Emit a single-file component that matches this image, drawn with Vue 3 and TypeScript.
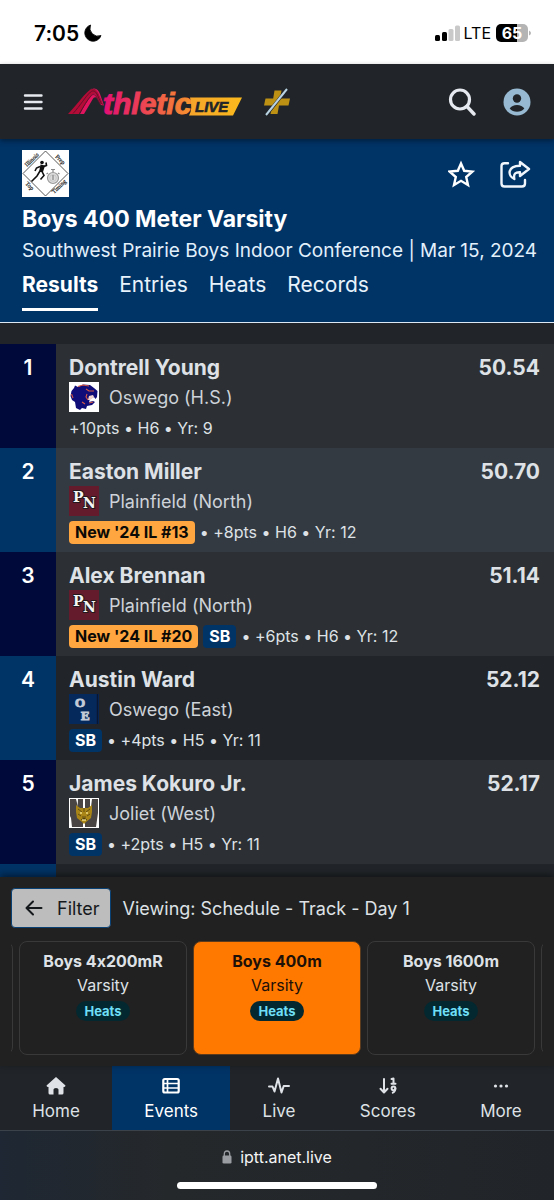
<script setup lang="ts">
import { ref } from 'vue'

type Logo = 'panther' | 'pn' | 'oe' | 'tiger'

interface Result {
  place: number
  name: string
  school: string
  logo: Logo
  rankBadge?: string
  seasonBest?: boolean
  details: string
  time: string
}

const results: Result[] = [
  { place: 1, name: 'Dontrell Young', school: 'Oswego (H.S.)', logo: 'panther', details: '+10pts • H6 • Yr: 9', time: '50.54' },
  { place: 2, name: 'Easton Miller', school: 'Plainfield (North)', logo: 'pn', rankBadge: "New '24 IL #13", details: '• +8pts • H6 • Yr: 12', time: '50.70' },
  { place: 3, name: 'Alex Brennan', school: 'Plainfield (North)', logo: 'pn', rankBadge: "New '24 IL #20", seasonBest: true, details: '• +6pts • H6 • Yr: 12', time: '51.14' },
  { place: 4, name: 'Austin Ward', school: 'Oswego (East)', logo: 'oe', seasonBest: true, details: '• +4pts • H5 • Yr: 11', time: '52.12' },
  { place: 5, name: 'James Kokuro Jr.', school: 'Joliet (West)', logo: 'tiger', seasonBest: true, details: '• +2pts • H5 • Yr: 11', time: '52.17' },
]

const tabs = ['Results', 'Entries', 'Heats', 'Records']
const activeTab = ref('Results')

const events = ['Boys 4x200mR', 'Boys 400m', 'Boys 1600m']
const activeEvent = ref('Boys 400m')

const navItems = ['Home', 'Events', 'Live', 'Scores', 'More']
const activeNav = ref('Events')
</script>

<template>
  <div class="screen">
    <div class="status">
      <div class="clock">
        <span>7:05</span>
        <svg width="18" height="18" viewBox="0 0 18 18" aria-hidden="true">
          <path d="M6.600 1A8.300 8.300 0 1 0 17 11.500A8 8 0 0 1 6.600 1Z" fill="#000" stroke="#000" stroke-width="0.800" stroke-linejoin="round" />
        </svg>
      </div>
      <div class="signal">
        <svg width="26" height="18" viewBox="0 0 26 18" aria-hidden="true">
          <rect x="0" y="11" width="5" height="6" rx="1.500" fill="#000" />
          <rect x="7" y="8" width="5" height="9" rx="1.500" fill="#000" />
          <rect x="13.500" y="5" width="5" height="12" rx="1.500" fill="#c9c9c9" />
          <rect x="20" y="1.500" width="5" height="15.500" rx="1.500" fill="#c9c9c9" />
        </svg>
        <span class="carrier">LTE</span>
        <span class="battery">65</span>
        <svg width="3" height="6" viewBox="0 0 3 6" aria-hidden="true"><path d="M1 0.500Q3 1.500 3 3T1 5.500Z" fill="#b4b4b4" /></svg>
      </div>
    </div>

    <header class="topbar">
      <button class="icon-btn menu" aria-label="Menu">
        <svg width="20" height="18" viewBox="0 0 20 18"><path d="M2 2.500H18.500M2 9H18.500M2 15.500H18.500" stroke="#e6eaf0" stroke-width="2.400" stroke-linecap="round" /></svg>
      </button>
      <a class="brand" href="#" aria-label="Athletic Live">
        <svg width="176" height="34" viewBox="0 0 176 34">
          <defs>
            <linearGradient id="word" gradientUnits="userSpaceOnUse" x1="36" y1="0" x2="124" y2="0">
              <stop offset="0" stop-color="#e20f74" /><stop offset="0.500" stop-color="#ee4a50" /><stop offset="1" stop-color="#f8962d" />
            </linearGradient>
            <linearGradient id="flag" x1="0" y1="0" x2="1" y2="0">
              <stop offset="0" stop-color="#f5a52b" /><stop offset="1" stop-color="#fbb91c" />
            </linearGradient>
          </defs>
          <path d="M0 29C7 22 14 12 20 6.500C24 2.500 28 3.500 30 8L35.500 20.500L32 18L28 10C27 8 25 8 23.500 10C19 16 14 24 11 29Z" fill="#b30c36" />
          <path d="M12 29C15 23 19 16 23.500 10C25 8 27 8 28 10L32 18L35.500 20.500L30 8C28 3.500 24 2.500 21 5.500C27 1.500 30 4 32 9L36 20.500L33 20L29 13.500C27.500 11.500 26 12 24.500 14.500L16 29Z" fill="#e0145f" />
          <path d="M5 28.500C12 21 17 12 22.500 7C25 5 27.500 6 29 9L33.500 19M11.500 28.500C16 21 19 15 23.500 10.500C25.500 8.500 27.500 10 28.500 12L32 19" stroke="#5f1029" stroke-width="0.900" fill="none" />
          <text x="35" y="29" font-family="Liberation Sans, Arial, sans-serif" font-size="30" font-weight="700" font-style="italic" fill="url(#word)" stroke="url(#word)" stroke-width="1">thletic</text>
          <path d="M122 12.500H174L165 30.500H121Q125 24 122 12.500Z" fill="url(#flag)" />
          <text x="127" y="27" font-family="Liberation Sans, Arial, sans-serif" font-size="15" font-weight="700" font-style="italic" fill="#212529" stroke="#212529" stroke-width="0.600">LIVE</text>
        </svg>
      </a>
      <a class="plus" href="#" aria-label="Plus">
        <svg width="28" height="30" viewBox="0 0 28 30">
          <path d="M10.500 3.500H17.500L16 11.500H26L24.500 18.500H15L13.500 27H6.500L8 18.500H0L1.500 11.500H9.200Z" fill="#bd9114" />
          <path d="M2 28.500L23 2" stroke="#212529" stroke-width="3" /><path d="M2 28L23 2" stroke="#b9d3e2" stroke-width="2" />
        </svg>
      </a>
      <span class="spacer"></span>
      <button class="icon-btn" aria-label="Search">
        <svg width="28" height="28" viewBox="0 0 28 28"><circle cx="12" cy="11.500" r="9.500" fill="none" stroke="#e6eaf0" stroke-width="3.200" /><path d="M19 18.500L26 26" stroke="#e6eaf0" stroke-width="3.400" stroke-linecap="round" /></svg>
      </button>
      <button class="icon-btn" aria-label="Account">
        <svg width="28" height="28" viewBox="0 0 28 28"><circle cx="14" cy="14" r="13.500" fill="#97bad2" /><circle cx="14" cy="10.500" r="4.200" fill="#212529" /><path d="M6.700 20.500Q9 17 14 17T21.300 20.500Q18.500 23.800 14 23.800T6.700 20.500Z" fill="#212529" /></svg>
      </button>
    </header>

    <section class="meet">
      <div class="meet-top">
        <svg class="meet-logo" width="47" height="47" viewBox="0 0 47 47" role="img" aria-label="Illinois Prep Top Timing">
          <rect width="47" height="47" fill="#fff" />
          <path d="M23.500 1L46 23.500L23.500 46L1 23.500Z" fill="#fff" stroke="#444" stroke-width="0.900" />
          <g font-family="Liberation Serif, serif" font-size="6" fill="#222" stroke="#222" stroke-width="0.200">
            <text transform="translate(5 17) rotate(-44)">Illinois</text>
            <text transform="translate(33 7) rotate(45)">Prep</text>
            <text transform="translate(3 34) rotate(45)">Top</text>
            <text transform="translate(32 44) rotate(-44)">Timing</text>
          </g>
          <circle cx="20" cy="12.500" r="1.800" fill="#111" />
          <path d="M18.500 14.500L23 15.500L21 22L17 22Z" fill="#111" />
          <path d="M18 16.500L14.500 18L13 21M22 16.500L24.500 15.500L24 12.500M18 21L15 26L9.500 31.500M20 21.500L22 25.500L18.500 29.500" stroke="#111" stroke-width="1.600" fill="none" />
          <circle cx="31" cy="28" r="5.500" fill="#ddd" stroke="#999" stroke-width="1.200" /><circle cx="31" cy="28" r="3.300" fill="none" stroke="#bbb" stroke-width="0.700" />
          <path d="M31 22V19M29 19.500H33M26 23L24.500 24M36 23L37.500 24M31 25V30" stroke="#888" stroke-width="1.200" />
        </svg>
        <span class="spacer"></span>
        <button class="icon-btn" aria-label="Favorite">
          <svg width="28" height="28" viewBox="0 0 28 28"><path d="M13 3.400L16.200 10.800L24.300 11.600L18.200 17L20 25L13 20.800L6 25L7.800 17L1.700 11.600L9.800 10.800Z" fill="none" stroke="#fff" stroke-width="2.400" /></svg>
        </button>
        <button class="icon-btn" aria-label="Share">
          <svg width="32" height="30" viewBox="0 0 32 30" fill="none" stroke="#f1f6fc" stroke-width="2.400" stroke-linecap="round" stroke-linejoin="round">
            <path d="M8 4.300H4.500Q1.500 4.300 1.500 7.300V24.500Q1.500 27.500 4.500 27.500H22Q25 27.500 25 24.500V21" />
            <path d="M20 3L29 10L20 17V13.200C15.500 13 13.300 14.700 14.300 20C7.500 17 7 7 20 6.800Z" />
          </svg>
        </button>
      </div>
      <h1>Boys 400 Meter Varsity</h1>
      <p class="subtitle">Southwest Prairie Boys Indoor Conference | Mar 15, 2024</p>
      <nav class="tabs">
        <a v-for="tab in tabs" :key="tab" href="#" :class="{ active: tab === activeTab }" @click.prevent="activeTab = tab">{{ tab }}</a>
      </nav>
    </section>

    <main class="results">
      <table>
        <tbody>
          <tr v-for="r in results" :key="r.place">
            <th scope="row" class="place">{{ r.place }}</th>
            <td class="athlete">
              <div class="name">{{ r.name }}</div>
              <div class="school">
                <svg v-if="r.logo === 'panther'" width="30" height="30" viewBox="0 0 30 30" aria-hidden="true">
                  <rect width="30" height="30" fill="#fff" />
                  <path d="M1.500 14L2.500 9L5 6L6 3.500L9 5L14 2.500L21 3L25 6L28.500 9L28 15L26.500 17L25 15L21 17L20 20L24 19L26 20L23 23L18 24L17 27L13 26L11 28L7 26L6 20L3 18Z" fill="#100c78" />
                  <path d="M9 4.500L14 3L20 4M17 7L20 9L25 9M2.500 12L4 16M18 12L17 15L19 18M13 20L16 22M20 21L24 20" stroke="#d65a45" stroke-width="1.100" fill="none" />
                  <path d="M20 14L24 13L25 15L21 18L19 18Z" fill="#f2d4cf" />
                </svg>
                <svg v-else-if="r.logo === 'pn'" width="30" height="30" viewBox="0 0 30 30" aria-hidden="true">
                  <rect width="30" height="30" fill="#641b2b" />
                  <g font-family="DejaVu Serif, serif" font-weight="700" font-size="14" fill="#f4f4f4" stroke="#24191c" stroke-width="2" paint-order="stroke">
                    <text x="4" y="16">P</text><text x="14" y="22">N</text>
                  </g>
                </svg>
                <svg v-else-if="r.logo === 'oe'" width="30" height="30" viewBox="0 0 30 30" aria-hidden="true">
                  <rect width="30" height="30" fill="#06295c" /><path d="M28.500 0V30" stroke="#0a1730" stroke-width="1.500" />
                  <g font-family="Liberation Serif, serif" font-weight="700" font-size="13" fill="#c3cbd7" stroke="#c3cbd7" stroke-width="1">
                    <text x="6" y="13">O</text><text x="12" y="26">E</text>
                  </g>
                </svg>
                <svg v-else width="30" height="30" viewBox="0 0 30 30" aria-hidden="true">
                  <rect width="30" height="30" fill="#fff" /><path d="M1 1H7L9 9V17L14 25V29H3L2 20L1 18ZM23 1H29V15L27 29H16V25L21 17Z" fill="#494544" />
                  <path d="M9 1H14V29H12L8 20ZM16 1H21V20L16 29Z" fill="#494544" />
                  <path d="M7 7L11 10H19L23 7V14L22 20L17 24L15 26L13 24L8 20L7 14Z" fill="#a98416" />
                  <path d="M9 11L13 14M21 11L17 14M15 10V14M9 16L12 18M21 16L18 18M13 19H17M12 22L15 20L18 22" stroke="#5a4712" stroke-width="0.900" />
                  <path d="M11 15H13M17 15H19M13 22H17" stroke="#f0dc83" stroke-width="1.300" />
                </svg>
                <span>{{ r.school }}</span>
              </div>
              <div class="details">
                <span v-if="r.rankBadge" class="badge rank">{{ r.rankBadge }}</span>
                <span v-if="r.seasonBest" class="badge sb">SB</span>
                <span>{{ r.details }}</span>
              </div>
            </td>
            <td class="time">{{ r.time }}</td>
          </tr>
          <tr class="next-row"><td class="place"></td><td></td><td></td></tr>
        </tbody>
      </table>
    </main>

    <section class="schedule">
      <div class="filter-row">
        <button class="filter">
          <svg width="18" height="16" viewBox="0 0 18 16" aria-hidden="true"><path d="M8 1.500L1.500 8L8 14.500M2 8H16.500" fill="none" stroke="#16191c" stroke-width="2" stroke-linecap="round" stroke-linejoin="round" /></svg>
          <span>Filter</span>
        </button>
        <span class="viewing">Viewing: Schedule - Track - Day 1</span>
      </div>
      <div class="carousel">
        <div class="card" aria-hidden="true"></div>
        <button v-for="e in events" :key="e" class="card" :class="{ current: e === activeEvent }" @click="activeEvent = e">
          <strong>{{ e }}</strong>
          <span class="division">Varsity</span>
          <span class="pill">Heats</span>
        </button>
        <div class="card" aria-hidden="true"></div>
      </div>
    </section>

    <nav class="bottom-nav">
      <a v-for="item in navItems" :key="item" href="#" :class="{ active: item === activeNav }" @click.prevent="activeNav = item">
        <svg width="22" height="20" viewBox="0 0 22 20" aria-hidden="true">
          <path v-if="item === 'Home'" d="M11 1L20.500 9.500Q20.500 11 18.500 11V17Q18.500 18.500 17 18.500H13.500V13.500Q13.500 12 11 12T8.500 13.500V18.500H5Q3.500 18.500 3.500 17V11Q1.500 11 1.500 9.500Z" fill="#dfe3e8" />
          <g v-else-if="item === 'Events'">
            <rect x="3.300" y="3" width="15.400" height="13.500" rx="1.500" fill="none" stroke="#fff" stroke-width="2.200" />
            <path d="M3 7.500H18M3 12H18M7.500 3V16.500" stroke="#fff" stroke-width="1.700" />
          </g>
          <path v-else-if="item === 'Live'" d="M1 10.500H4.500L6.500 15.500L10 2.500L13.500 16.500L15.700 10H21" fill="none" stroke="#dfe3e8" stroke-width="2" stroke-linejoin="round" stroke-linecap="round" />
          <g v-else-if="item === 'Scores'" fill="none" stroke="#dfe3e8" stroke-width="2" stroke-linecap="round" stroke-linejoin="round">
            <path d="M7 3V16M3.500 12.800L7 16.500L10.500 12.800M14.500 3L16.500 2.500V7.500M14.500 7.800H18.500" />
            <circle cx="16.500" cy="12.300" r="1.900" /><path d="M18.300 12.500Q18.300 15.500 15.800 16.700" />
          </g>
          <g v-else fill="#dfe3e8"><circle cx="5.500" cy="10" r="1.600" /><circle cx="11" cy="10" r="1.600" /><circle cx="16.500" cy="10" r="1.600" /></g>
        </svg>
        <span>{{ item }}</span>
      </a>
    </nav>

    <footer class="browser">
      <div class="address">
        <svg width="10" height="14" viewBox="0 0 10 14" aria-hidden="true"><path d="M2.300 6V4Q2.300 1 5 1T7.700 4V6" fill="none" stroke="#9a9da1" stroke-width="1.300" /><rect x="0.500" y="5.500" width="9" height="8" rx="1.300" fill="#9a9da1" /></svg>
        <span>iptt.anet.live</span>
      </div>
      <div class="indicator"></div>
    </footer>
  </div>
</template>

<style>
body {
  margin: 0;
  background: #212529;
}
</style>

<style scoped>
.screen {
  display: flex;
  flex-direction: column;
  height: 100vh;
  overflow: hidden;
  background: #212529;
  color: #dee2e6;
  font-family: Inter, Roboto, sans-serif;
  font-feature-settings: "calt" 0;
}
.screen * {
  box-sizing: border-box;
}
svg {
  display: block;
  flex: none;
}
button {
  font: inherit;
  font-feature-settings: "calt" 0;
  color: inherit;
  cursor: pointer;
}
a {
  color: inherit;
  text-decoration: none;
}
.spacer {
  flex: 1;
}
.icon-btn {
  padding: 0;
  border: 0;
  background: none;
}

.status {
  flex: none;
  display: flex;
  justify-content: space-between;
  align-items: center;
  height: 64px;
  padding: 2px 23px 0 34px;
  background: #fff;
  color: #000;
}
.clock {
  display: flex;
  align-items: center;
  gap: 5px;
  font-size: 21px;
  font-weight: 600;
}
.signal {
  display: flex;
  align-items: center;
}
.carrier {
  margin: 0 5px 0 3px;
  font-size: 16px;
}
.battery {
  width: 32px;
  border-radius: 5px;
  background: linear-gradient(90deg, #000 65%, #b4b4b4 65%);
  color: #fff;
  font-size: 16px;
  font-weight: 700;
  line-height: 18px;
  text-align: center;
}

.topbar {
  position: relative;
  flex: none;
  display: flex;
  align-items: center;
  height: 75px;
  padding: 0 23px;
  background: #212529;
  box-shadow: 0 2px 5px rgba(0, 0, 0, 0.4);
}
.brand {
  margin-left: 25px;
}
.plus {
  margin-left: 20px;
}
.topbar .icon-btn + .icon-btn {
  margin-left: 27px;
}

.meet {
  flex: none;
  padding: 11px 22px 0;
  border-bottom: 1px solid #dce8f4;
  background: #003366;
  color: #fff;
}
.meet-top {
  display: flex;
  align-items: center;
}
.meet-top .icon-btn + .icon-btn {
  margin-left: 24px;
}
h1 {
  margin: 8px 0 0;
  font-size: 23px;
  font-weight: 700;
  line-height: 28px;
}
.subtitle {
  margin: 4px 0 0;
  color: #e2f0fb;
  font-size: 19px;
  line-height: 28px;
  white-space: nowrap;
}
.tabs {
  display: flex;
  gap: 21px;
  margin-top: 6px;
  color: #e8f3fc;
  font-size: 21px;
  line-height: 28px;
}
.tabs a {
  height: 40px;
  margin-bottom: 11px;
}
.tabs .active {
  border-bottom: 3px solid #fff;
  color: #fff;
  font-weight: 700;
}

.results {
  flex: 1;
  min-height: 0;
  overflow: hidden;
  padding-top: 21px;
}
table {
  width: 100%;
  border-collapse: collapse;
}
tr {
  height: 104px;
}
tr:nth-child(odd) {
  background: #2c3034;
}
tr:nth-child(2) {
  background: #343a42;
}
th,
td {
  padding: 0;
  vertical-align: top;
}
.place {
  width: 56px;
  padding-top: 10px;
  background: #000a3a;
  color: #fff;
  font-size: 21px;
  font-weight: 600;
  line-height: 28px;
}
tr:nth-child(even) .place {
  background: #003366;
}
.next-row {
  height: 24px;
}
.athlete {
  padding: 10px 0 0 13px;
}
.name {
  font-size: 21px;
  font-weight: 700;
  line-height: 28px;
}
.school {
  display: flex;
  align-items: center;
  gap: 10px;
  height: 30px;
  color: #ced3d9;
  font-size: 18px;
}
.details {
  display: flex;
  align-items: center;
  gap: 5px;
  height: 32px;
  font-size: 16px;
  white-space: nowrap;
}
.badge {
  padding: 0 6px;
  border-radius: 4px;
  font-weight: 700;
  line-height: 23px;
}
.rank {
  background: #ffa640;
  color: #0c0a06;
}
.sb {
  background: #003366;
  color: #fff;
}
.time {
  padding: 10px 14px 0 0;
  font-size: 21px;
  font-weight: 700;
  line-height: 28px;
  text-align: right;
}

.schedule {
  position: relative;
  flex: none;
  padding: 11px 11px 11px;
  background: #212121;
  box-shadow: 0 -2px 7px rgba(0, 0, 0, 0.5);
}
.filter-row {
  display: flex;
  align-items: center;
  gap: 12px;
  margin-bottom: 13px;
}
.filter {
  display: flex;
  align-items: center;
  gap: 14px;
  height: 40px;
  padding: 0 10px 0 13px;
  border: 1px solid #0a4174;
  border-radius: 4px;
  background: #bdbdbd;
  color: #16191c;
  font-size: 18px;
}
.viewing {
  font-size: 18px;
  white-space: nowrap;
}
.carousel {
  display: flex;
  justify-content: center;
  gap: 6px;
  overflow: hidden;
}
.card {
  flex: none;
  display: flex;
  flex-direction: column;
  align-items: center;
  width: 168px;
  height: 114px;
  padding: 7px 0 0;
  border: 1px solid #393939;
  border-radius: 8px;
  background: none;
  font-size: 16px;
  line-height: 24px;
}
.card.current {
  border-color: #5c3a1c;
  background: #ff7900;
  color: #1d1008;
}
.pill {
  margin-top: 4px;
  padding: 0 8px;
  border-radius: 10px;
  background: #032830;
  color: #6edff6;
  font-size: 13px;
  font-weight: 700;
  line-height: 20px;
}

.bottom-nav {
  flex: none;
  display: flex;
  height: 65px;
  border-bottom: 1px solid #3b4249;
  background: #212529;
  font-size: 17px;
}
.bottom-nav a {
  flex: 1 1 auto;
  display: flex;
  flex-direction: column;
  align-items: center;
  gap: 4px;
  padding-top: 10px;
  line-height: 22px;
}
.bottom-nav .active {
  background: #003366;
  color: #fff;
}

.browser {
  flex: none;
  display: flex;
  flex-direction: column;
  align-items: center;
  justify-content: space-between;
  height: 69px;
  padding: 14px 0 11px;
  background: linear-gradient(90deg, #1e2733, #25282b 30%, #212529);
}
.address {
  display: flex;
  align-items: center;
  gap: 8px;
  color: #f4f5f6;
  font-size: 16px;
  line-height: 24px;
}
.indicator {
  width: 36%;
  height: 7px;
  border-radius: 4px;
  background: #fff;
}
</style>
